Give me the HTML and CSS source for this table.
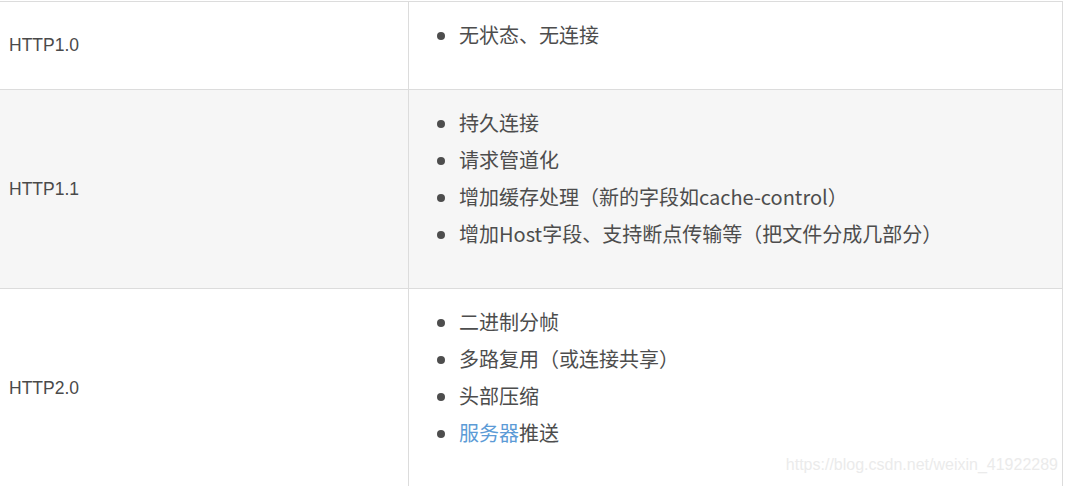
FILE: index.html
```html
<!DOCTYPE html>
<html lang="zh-CN">
<head>
  <meta charset="UTF-8">
  <meta name="viewport" content="width=device-width, initial-scale=1.0">
  <title>HTTP 版本对比</title>
  <link rel="stylesheet" href="styles.css">
</head>
<body>
  <div class="article">
    <table class="versions">
      <tr>
        <td class="name">HTTP1.0</td>
        <td class="features">
          <ul>
            <li>无状态、无连接</li>
          </ul>
        </td>
      </tr>
      <tr class="alt">
        <td class="name">HTTP1.1</td>
        <td class="features">
          <ul>
            <li>持久连接</li>
            <li>请求管道化</li>
            <li>增加缓存处理（新的字段如cache-control）</li>
            <li>增加Host字段、支持断点传输等（把文件分成几部分）</li>
          </ul>
        </td>
      </tr>
      <tr>
        <td class="name">HTTP2.0</td>
        <td class="features">
          <ul>
            <li>二进制分帧</li>
            <li>多路复用（或连接共享）</li>
            <li>头部压缩</li>
            <li><a href="#">服务器</a>推送</li>
          </ul>
        </td>
      </tr>
    </table>
    <div class="watermark">https://blog.csdn.net/weixin_41922289</div>
  </div>
</body>
</html>
```

FILE: styles.css
```css
body {
  margin: 0;
  padding: 0;
  background-color: #fff;
  color: #4d4d4d;
  font-family: "Noto Sans CJK SC", sans-serif;
  overflow: hidden;
}
.article {
  position: relative;
  height: 486px;
  padding-top: 1px;
  box-sizing: border-box;
}
.versions {
  width: 1063px;
  border-collapse: collapse;
}
.versions td {
  border: 1px solid #dcdcdc;
  border-left: none;
}
.versions tr.alt td {
  background-color: #f6f6f6;
}
.name {
  width: 399px;
  padding: 0 0 0 9px;
  font-family: "Liberation Sans", Arial, sans-serif;
  font-size: 17.5px;
  color: #4a4a4a;
  vertical-align: middle;
}
.features {
  padding: 14px 0 36px 0;
}
.features ul {
  margin: 0;
  padding-left: 50px;
}
.features li {
  font-size: 20px;
  line-height: 37px;
}
.features a {
  color: #5c9bd6;
  text-decoration: none;
}
.watermark {
  position: absolute;
  right: 9px;
  top: 456px;
  font-family: "Liberation Sans", Arial, sans-serif;
  font-size: 16px;
  color: #ebebeb;
}
```
